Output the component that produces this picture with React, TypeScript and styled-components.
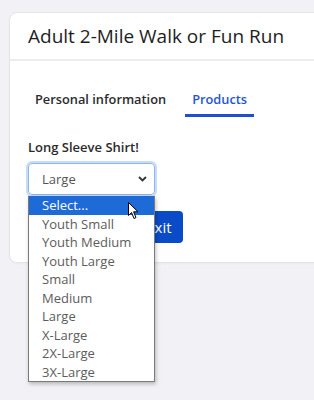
import React from "react";
import styled, { createGlobalStyle } from "styled-components";

const Global = createGlobalStyle`
  html, body { margin: 0; padding: 0; overflow: hidden; }
  body {
    background: #f2f2f6;
    font-family: "Open Sans", "Noto Sans", sans-serif;
    width: 314px;
    height: 400px;
  }
`;

const Page = styled.div`
  padding: 12px 0 0 9px;
  width: 360px;
`;

const Card = styled.div`
  background: #fff;
  border: 1px solid #e4e4ea;
  border-radius: 8px;
  width: 340px;
  box-shadow: 0 1px 2px rgba(0, 0, 0, 0.03);
`;

const Header = styled.div`
  height: 46px;
  border-bottom: 2px solid #ececf0;
  display: flex;
  align-items: center;
  padding: 0 0 0 18px;
`;

const Title = styled.h1`
  margin: 0;
  font-size: 19px;
  font-weight: 500;
  color: #1e1e1e;
  white-space: nowrap;
`;

const Body = styled.div`
  padding: 26px 0 19px 18px;
`;

const Tabs = styled.div`
  display: flex;
  margin-bottom: 21px;
`;

const Tab = styled.div<{ $active?: boolean }>`
  padding: 3px 7px 6px;
  font-size: 12.8px;
  font-weight: 600;
  color: ${(p) => (p.$active ? "#2456d3" : "#2b2b2b")};
  border-bottom: 3px solid ${(p) => (p.$active ? "#1f4fd0" : "transparent")};
  margin-right: 12px;
`;

const Label = styled.div`
  font-size: 13px;
  font-weight: 600;
  color: #2b2b2b;
  margin-bottom: 7px;
`;

const SelectWrap = styled.div`
  position: relative;
  width: 127px;
`;

const SelectBox = styled.div`
  box-sizing: border-box;
  height: 32px;
  width: 127px;
  border: 1px solid #8fb4ea;
  border-radius: 4px;
  box-shadow: 0 0 0 2px #c9dcf6;
  display: flex;
  align-items: center;
  justify-content: space-between;
  padding: 0 7px 0 13px;
  font-size: 13px;
  color: #555;
`;

const Chevron = styled.svg`
  width: 9px;
  height: 6px;
`;

const List = styled.ul`
  position: absolute;
  top: 33px;
  left: 0;
  margin: 0;
  padding: 0;
  list-style: none;
  width: 127px;
  box-sizing: border-box;
  background: #fff;
  border: 1px solid #7a7a7a;
  border-top: none;
  box-shadow: 1px 2px 4px rgba(0, 0, 0, 0.25);
  z-index: 2;
`;

const Item = styled.li<{ $selected?: boolean }>`
  height: 18.5px;
  line-height: 18.5px;
  padding-left: 13px;
  font-size: 13px;
  color: ${(p) => (p.$selected ? "#fff" : "#5c5c5c")};
  background: ${(p) => (p.$selected ? "#1e6ad6" : "transparent")};
  position: relative;
`;

const Cursor = styled.svg`
  position: absolute;
  left: 99px;
  top: 6px;
  width: 12px;
  height: 18px;
`;

const Actions = styled.div`
  display: flex;
  margin-top: 16px;
`;

const Button = styled.button`
  margin-left: 56px;
  height: 32px;
  padding: 0 11px;
  border: none;
  border-radius: 4px;
  background: #0a4bc8;
  color: #fff;
  font-family: "Open Sans", sans-serif;
  font-size: 15px;
  font-weight: 500;
`;

const options = [
  "Select...",
  "Youth Small",
  "Youth Medium",
  "Youth Large",
  "Small",
  "Medium",
  "Large",
  "X-Large",
  "2X-Large",
  "3X-Large",
];

export default function App() {
  return (
    <>
      <Global />
      <Page>
        <Card>
          <Header>
            <Title>Adult 2-Mile Walk or Fun Run</Title>
          </Header>
          <Body>
            <Tabs>
              <Tab>Personal information</Tab>
              <Tab $active>Products</Tab>
            </Tabs>
            <Label>Long Sleeve Shirt!</Label>
            <SelectWrap>
              <SelectBox>
                <span>Large</span>
                <Chevron viewBox="0 0 9 6">
                  <path d="M1 1 L4.5 4.5 L8 1" fill="none" stroke="#333" strokeWidth="1.8" />
                </Chevron>
              </SelectBox>
              <List>
                {options.map((o, i) => (
                  <Item key={o} $selected={i === 0}>
                    {o}
                    {i === 0 && (
                      <Cursor viewBox="0 0 12 18">
                        <path
                          d="M0.5 0.5 L0.5 13.5 L3.5 10.5 L6 16.5 L8 15.6 L5.6 9.8 L10 9.8 Z"
                          fill="#fff"
                          stroke="#000"
                          strokeWidth="1"
                          strokeLinejoin="round"
                        />
                      </Cursor>
                    )}
                  </Item>
                ))}
              </List>
            </SelectWrap>
            <Actions>
              <Button>Save &amp; Exit</Button>
            </Actions>
          </Body>
        </Card>
      </Page>
    </>
  );
}
